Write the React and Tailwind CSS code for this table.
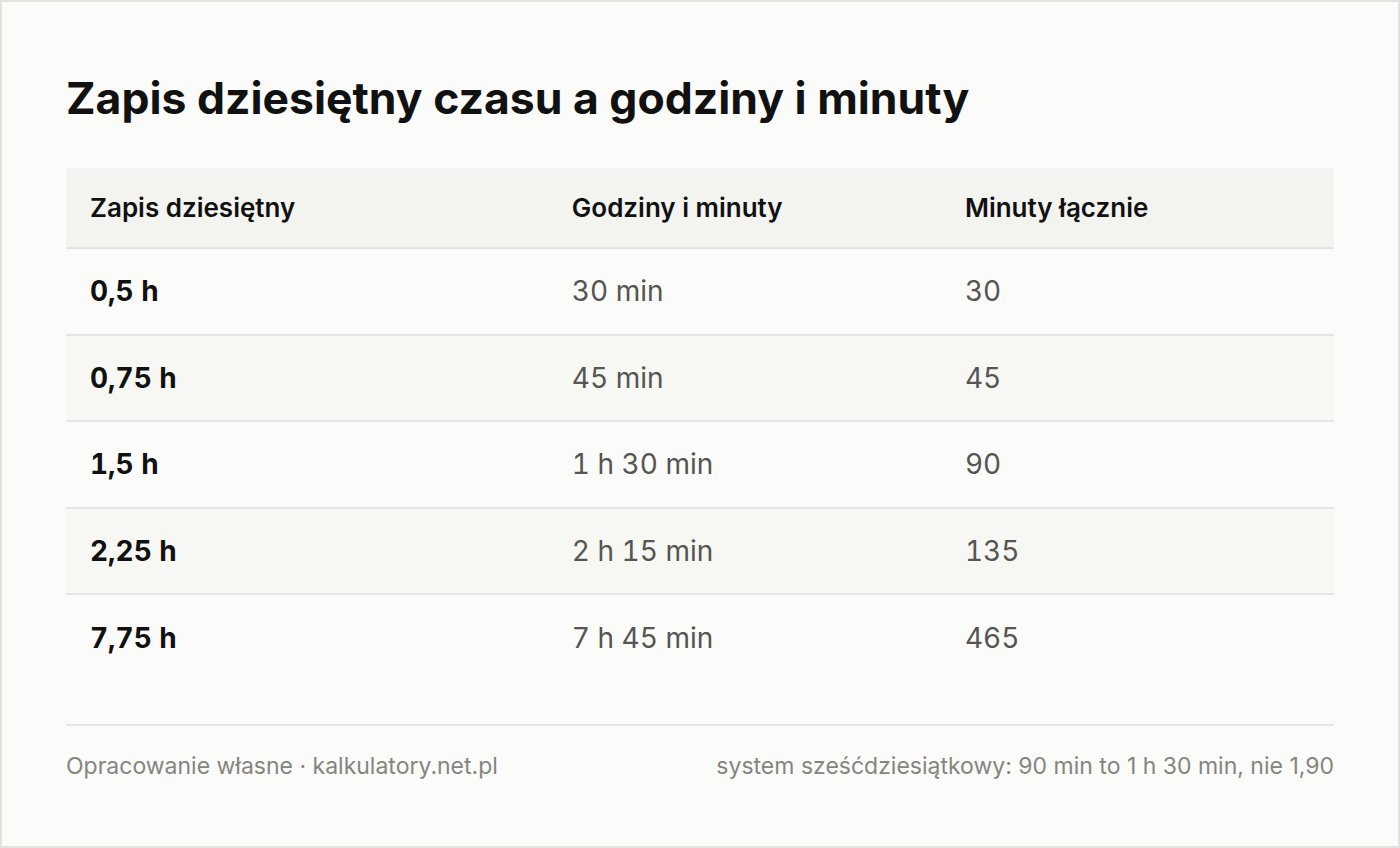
import React from 'react';

const rows = [
    { dec: '0,5 h', hm: '30 min', total: '30' },
    { dec: '0,75 h', hm: '45 min', total: '45' },
    { dec: '1,5 h', hm: '1 h 30 min', total: '90' },
    { dec: '2,25 h', hm: '2 h 15 min', total: '135' },
    { dec: '7,75 h', hm: '7 h 45 min', total: '465' },
];

const App = () => {
    return (
        <div className="w-[1400px] h-[848px] border-2 border-[#e3e3dc] bg-[#fbfbf9] px-16 pt-[60px] flex flex-col" style={{ fontFamily: 'Inter, "Noto Sans", sans-serif' }}>
            <h1 className="text-[44.5px] leading-[72px] font-bold text-[#111]">
                Zapis dziesiętny czasu a godziny i minuty
            </h1>

            <table className="mt-[34px] w-full border-collapse text-left">
                <thead>
                    <tr className="bg-[#f3f3f0] border-b-2 border-[#e4e4de]">
                        <th className="w-[38%] h-[80px] px-6 text-[26px] font-semibold text-[#111]">Zapis dziesiętny</th>
                        <th className="w-[31%] px-6 text-[26px] font-semibold text-[#111]">Godziny i minuty</th>
                        <th className="px-6 text-[26px] font-semibold text-[#111]">Minuty łącznie</th>
                    </tr>
                </thead>
                <tbody className="tabular-nums">
                    {rows.map((row, index) => (
                        <tr
                            key={index}
                            className={`border-b-2 border-[#e6e6e0] last:border-b-0 ${index % 2 === 1 ? 'bg-[#f7f7f4]' : ''}`}
                        >
                            <td className="h-[86.5px] px-6 text-[28px] font-bold text-[#111]">{row.dec}</td>
                            <td className="px-6 text-[28px] text-[#555552]">{row.hm}</td>
                            <td className="px-6 text-[28px] text-[#555552]">{row.total}</td>
                        </tr>
                    ))}
                </tbody>
            </table>

            <div className="mt-[43px] border-t-2 border-[#e6e6e0] pt-[26px] flex justify-between text-[23px] leading-[28px] text-[#858580]">
                <span>Opracowanie własne · kalkulatory.net.pl</span>
                <span>system sześćdziesiątkowy: 90 min to 1 h 30 min, nie 1,90</span>
            </div>
        </div>
    );
};

export default App;
